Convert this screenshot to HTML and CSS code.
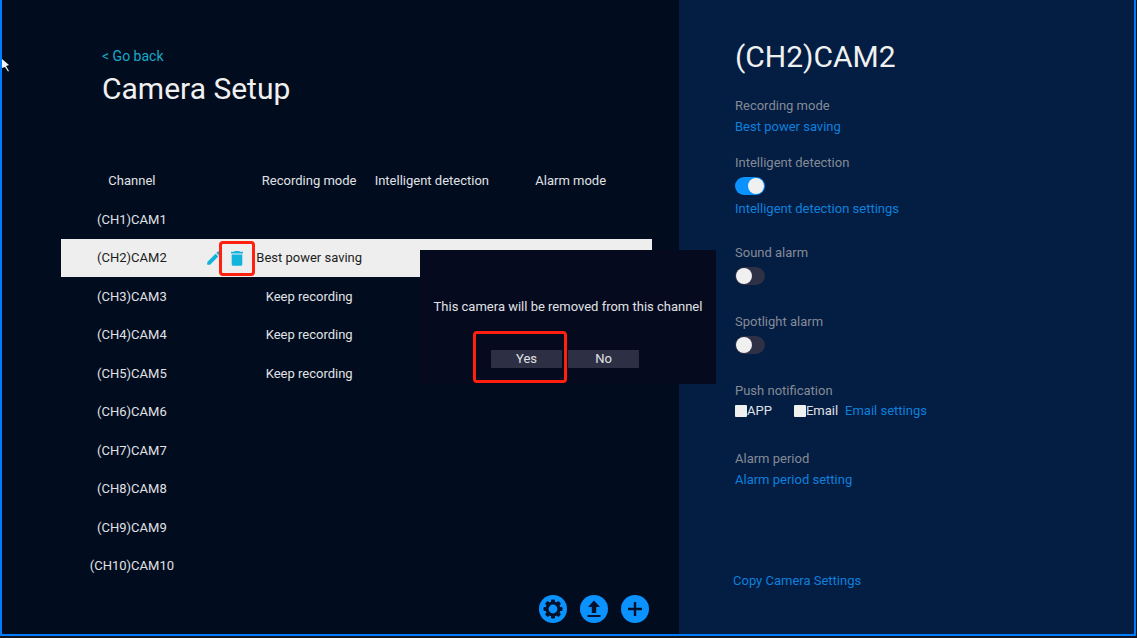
FILE: index.html
```html
<!DOCTYPE html>
<html lang="en">
<head>
<meta charset="utf-8">
<title>Camera Setup</title>
<link rel="stylesheet" href="styles.css">
</head>
<body>
<div class="screen">
  <main class="setup">
    <a class="back" href="#">&lt; Go back</a>
    <h1 class="title">Camera Setup</h1>
    <table class="channels">
      <colgroup><col class="col-channel"><col class="col-tools"><col class="col-record"><col class="col-detect"><col class="col-alarm"></colgroup>
      <thead>
        <tr><th>Channel</th><th></th><th>Recording mode</th><th>Intelligent detection</th><th>Alarm mode</th></tr>
      </thead>
      <tbody>
        <tr><td>(CH1)CAM1</td><td></td><td></td><td></td><td></td></tr>
        <tr class="selected">
          <td>(CH2)CAM2</td>
          <td>
            <div class="tools">
              <button class="tool" type="button" aria-label="Edit"><svg viewBox="0 0 24 24" width="18" height="18"><path d="M3 17.200V21h3.800L17.800 9.900l-3.700-3.700zM20.700 7a1 1 0 0 0 0-1.400l-2.300-2.300a1 1 0 0 0-1.400 0l-1.900 1.900 3.700 3.700z"/></svg></button>
              <button class="tool marked" type="button" aria-label="Delete"><svg viewBox="0 0 12 15" width="12" height="15"><path d="M0 .8h3L3.800 0h4.400L9 .8h3v1.700H0zM.7 3.500h10.600v9.700a1.500 1.500 0 0 1-1.500 1.500H2.200a1.500 1.500 0 0 1-1.500-1.500z"/></svg></button>
            </div>
          </td>
          <td>Best power saving</td><td></td><td></td>
        </tr>
        <tr><td>(CH3)CAM3</td><td></td><td>Keep recording</td><td></td><td></td></tr>
        <tr><td>(CH4)CAM4</td><td></td><td>Keep recording</td><td></td><td></td></tr>
        <tr><td>(CH5)CAM5</td><td></td><td>Keep recording</td><td></td><td></td></tr>
        <tr><td>(CH6)CAM6</td><td></td><td></td><td></td><td></td></tr>
        <tr><td>(CH7)CAM7</td><td></td><td></td><td></td><td></td></tr>
        <tr><td>(CH8)CAM8</td><td></td><td></td><td></td><td></td></tr>
        <tr><td>(CH9)CAM9</td><td></td><td></td><td></td><td></td></tr>
        <tr><td>(CH10)CAM10</td><td></td><td></td><td></td><td></td></tr>
      </tbody>
    </table>
    <div class="actions">
      <button class="round" type="button" aria-label="Settings"><svg viewBox="0 0 28 28" width="28" height="28"><g fill="currentColor"><rect x="12" y="4.500" width="4" height="19" rx="1"/><rect x="12" y="4.500" width="4" height="19" rx="1" transform="rotate(45 14 14)"/><rect x="12" y="4.500" width="4" height="19" rx="1" transform="rotate(90 14 14)"/><rect x="12" y="4.500" width="4" height="19" rx="1" transform="rotate(135 14 14)"/><circle cx="14" cy="14" r="7.500"/></g><circle class="hub" cx="14" cy="14" r="4.400"/></svg></button>
      <button class="round" type="button" aria-label="Upload"><svg viewBox="0 0 28 28" width="28" height="28"><path fill="currentColor" d="M14 5.500l6 6.500h-3.800V18h-4.400v-6H8zM7.500 20h13v2h-13z"/></svg></button>
      <button class="round" type="button" aria-label="Add"><svg viewBox="0 0 28 28" width="28" height="28"><path fill="currentColor" d="M12.800 7h2.400v5.800H21v2.400h-5.800V21h-2.400v-5.800H7v-2.400h5.800z"/></svg></button>
    </div>
  </main>
  <aside class="details">
    <h2 class="title">(CH2)CAM2</h2>
    <section class="group"><h3>Recording mode</h3><a href="#">Best power saving</a></section>
    <section class="group wide">
      <h3><label for="detect">Intelligent detection</label></h3>
      <input class="switch" type="checkbox" id="detect" checked>
      <a href="#">Intelligent detection settings</a>
    </section>
    <section class="group wide"><h3><label for="sound">Sound alarm</label></h3><input class="switch" type="checkbox" id="sound"></section>
    <section class="group wide"><h3><label for="spot">Spotlight alarm</label></h3><input class="switch" type="checkbox" id="spot"></section>
    <section class="group tight">
      <h3>Push notification</h3>
      <div class="push">
        <label class="app"><input class="box" type="checkbox">APP</label>
        <label><input class="box" type="checkbox">Email</label>
        <a href="#">Email settings</a>
      </div>
    </section>
    <section class="group"><h3>Alarm period</h3><a href="#">Alarm period setting</a></section>
    <a class="copy" href="#">Copy Camera Settings</a>
  </aside>
  <div class="dialog" role="dialog" aria-labelledby="message">
    <p id="message">This camera will be removed from this channel</p>
    <div class="choices">
      <button class="choice marked" type="button">Yes</button>
      <button class="choice" type="button">No</button>
    </div>
  </div>
</div>
<svg class="pointer" viewBox="0 0 8 14" width="8" height="14"><path d="M0 0l7 6-3 1 3 5-1 .5L3 8 0 9z"/></svg>
</body>
</html>
```
FILE: styles.css
```css
* { box-sizing: border-box; }
body {
  margin: 0;
  min-height: 100vh;
  display: flex;
  padding: 0 1px 2px 0;
  background: #15151d;
  color: #e0e2e5;
  font: 13px/20px Roboto, "Liberation Sans", sans-serif;
}
button { margin: 0; padding: 0; border: 0; font: inherit; color: inherit; cursor: pointer; }
svg { display: block; }
a { color: #0f80dc; text-decoration: none; }
h1, h2, h3, p { margin: 0; font-weight: 400; }
.screen {
  position: relative;
  flex: 1;
  display: grid;
  grid-template-columns: 677fr 455fr;
  border: solid #007dff;
  border-width: 0 2px 2px;
}
.setup {
  display: flex;
  flex-direction: column;
  padding: 46px 27px 11px 59px;
  background: #010c1f;
}
.back { margin-left: 41px; align-self: flex-start; color: #18a9c8; font-size: 14px; }
.title { font-size: 30px; line-height: 40px; color: #f0f0f0; }
.setup .title { margin: 3px 0 53px 41px; }
.channels { width: 100%; table-layout: fixed; border-collapse: collapse; }
.channels th, .channels td { padding: 0; font-weight: 400; text-align: center; white-space: nowrap; }
.channels tr { height: 38px; }
.channels tbody tr:nth-child(odd) { height: 39px; }
.col-channel { width: 24%; }
.col-tools { width: 7%; }
.col-record { width: 22%; }
.col-detect { width: 19.5%; }
.col-alarm { width: 27.5%; }
.selected { background: #eee; color: #1c1d22; }
.tools { display: flex; justify-content: center; align-items: center; gap: 8px; }
.tool { background: none; color: #12b4dc; }
.tool svg { fill: currentColor; }
.marked { position: relative; }
.marked::after {
  content: "";
  position: absolute;
  inset: -10px -12px;
  border: 3px solid #ff2010;
  border-radius: 4px;
  pointer-events: none;
}
.actions { display: flex; justify-content: flex-end; gap: 13px; margin-top: auto; padding-right: 3px; }
.round { border-radius: 50%; background: #0a93ff; color: #03122a; }
.hub { fill: #0a93ff; }
.details {
  display: flex;
  flex-direction: column;
  align-items: flex-start;
  padding: 37px 24px 43px 56px;
  background: #031d43;
}
.details .title { margin-bottom: 19px; }
.group { display: flex; flex-direction: column; align-items: flex-start; gap: 1px; margin-bottom: 16px; }
.group.wide { margin-bottom: 24px; }
.group.tight { gap: 0; margin-bottom: 28px; }
.group h3 { font-size: 13px; color: #858b96; }
.switch {
  appearance: none;
  display: flex;
  width: 30px;
  height: 18px;
  margin: 3px 0;
  padding: 1px;
  border-radius: 9px;
  background: #2e3045;
}
.switch::before { content: ""; width: 16px; height: 16px; border-radius: 50%; background: #f0f0f0; }
.switch:checked { justify-content: flex-end; background: #0a93ff; }
.push { display: flex; }
.push label { display: flex; align-items: center; margin-right: 7px; }
.push .app { margin-right: 22px; }
.box { appearance: none; width: 12px; height: 12px; margin: 0; border-radius: 1px; background: #f0f0f0; }
.copy { margin-top: auto; margin-left: -2px; }
.dialog {
  position: absolute;
  top: 50%;
  left: 50%;
  transform: translate(-50%, -50%);
  width: 296px;
  padding: 47px 0 16px;
  background: #050a1f;
  text-align: center;
}
.choices { display: flex; justify-content: center; gap: 6px; padding: 33px 6px 0 0; }
.choice { width: 71px; height: 18px; border-radius: 1px; background: #2d3044; line-height: 18px; }
.choice.marked::after { inset: -19px -5px -15px -18px; }
.pointer { position: absolute; left: 2px; top: 59px; fill: #f4f4f4; }
```
